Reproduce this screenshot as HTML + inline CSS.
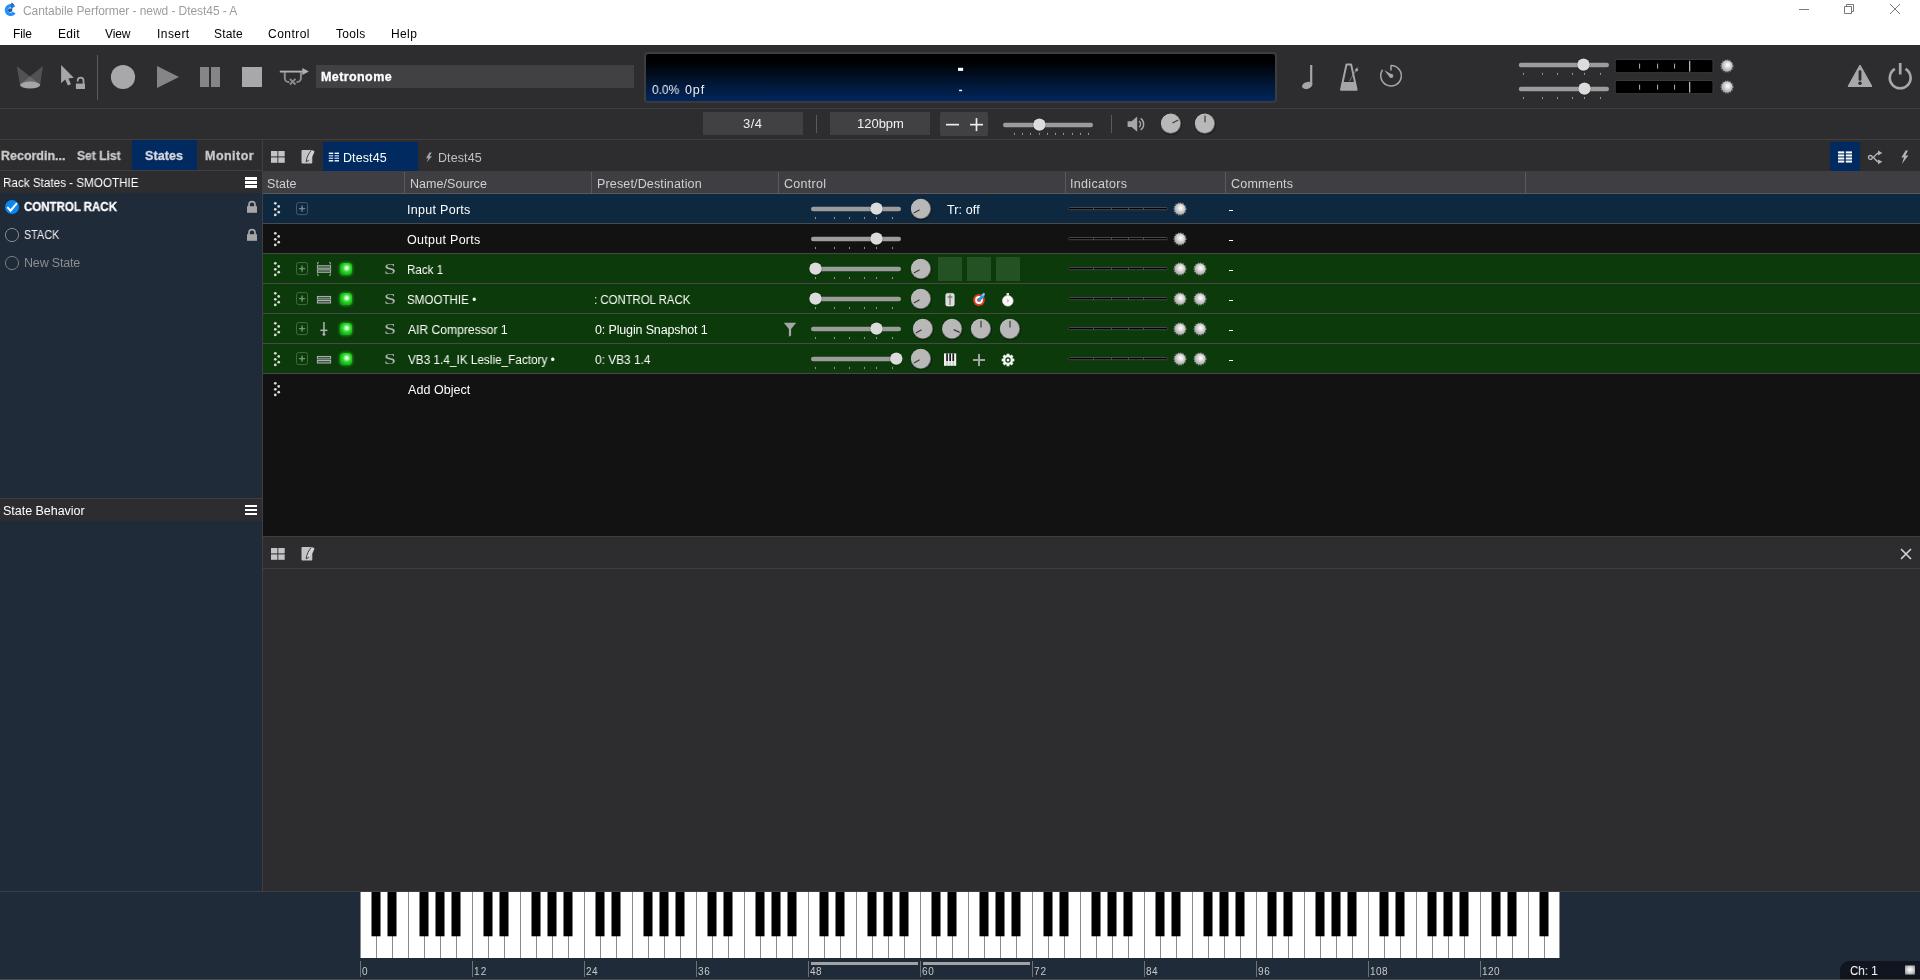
<!DOCTYPE html>
<html lang="en"><head><meta charset="utf-8"><title>Cantabile Performer - newd - Dtest45 - A</title>
<style>
html,body{margin:0;padding:0}
body{width:1920px;height:980px;position:relative;overflow:hidden;background:#2d2d2f;font-family:"Liberation Sans",sans-serif;font-size:12.5px}
.a{position:absolute;display:block}
.t{position:absolute;white-space:pre;line-height:20px;transform-origin:0 0;display:block;will-change:transform}
</style></head><body>
<svg width="0" height="0" style="position:absolute"><defs>
<radialGradient id="led" cx="56%" cy="42%" r="62%"><stop offset="0" stop-color="#ffffff"/><stop offset="0.18" stop-color="#f2f2f2"/><stop offset="0.5" stop-color="#d0d0d0"/><stop offset="0.85" stop-color="#aeaeae"/><stop offset="1" stop-color="#989898"/></radialGradient>
<radialGradient id="gled" cx="56%" cy="42%" r="62%"><stop offset="0" stop-color="#ffffff"/><stop offset="0.22" stop-color="#b8f8b8"/><stop offset="0.5" stop-color="#34dc34"/><stop offset="0.85" stop-color="#16b816"/><stop offset="1" stop-color="#12a012"/></radialGradient>
<linearGradient id="knob" x1="0.15" y1="0.1" x2="0.85" y2="0.9"><stop offset="0" stop-color="#dadada"/><stop offset="0.5" stop-color="#7a7a7a"/><stop offset="1" stop-color="#4a4a4a"/></linearGradient>
<linearGradient id="disp" x1="0" y1="0" x2="0" y2="1"><stop offset="0" stop-color="#000000"/><stop offset="0.18" stop-color="#000000"/><stop offset="1" stop-color="#01265e"/></linearGradient>
</defs></svg>

<div class="a" style="left:0px;top:0px;width:1920px;height:45px;background:#ffffff;"></div>
<svg class="a" style="left:2px;top:1px" width="16" height="16" viewBox="0 0 16 16"><path d="M13.3 5.2 A6 6 0 1 0 13.6 12.6 L10.6 10.6 A2.6 2.6 0 1 1 10.2 7.2 Z" fill="#1e90ff"/><circle cx="8" cy="9.3" r="2.1" fill="#2a5c9c"/><path d="M9.3 9.3V1.6c1.4.3 3 1.6 3.2 4-1-1.3-1.9-1.8-2.2-1.8v5.5z" fill="#2a5c9c"/></svg>
<span class="t" style="left:23.21px;top:0.59px;font-size:12px;color:#9e9e9e;letter-spacing:-0.062px;">Cantabile Performer - newd - Dtest45 - A</span>
<span class="t" style="left:12.77px;top:23.84px;font-size:12px;color:#000;letter-spacing:-0.139px;">File</span>
<span class="t" style="left:57.77px;top:23.84px;font-size:12px;color:#000;letter-spacing:0.268px;">Edit</span>
<span class="t" style="left:104.82px;top:23.84px;font-size:12px;color:#000;letter-spacing:-0.123px;">View</span>
<span class="t" style="left:156.62px;top:23.84px;font-size:12px;color:#000;letter-spacing:0.437px;">Insert</span>
<span class="t" style="left:214.28px;top:23.84px;font-size:12px;color:#000;letter-spacing:0.165px;">State</span>
<span class="t" style="left:268.46px;top:23.84px;font-size:12px;color:#000;letter-spacing:0.464px;">Control</span>
<span class="t" style="left:335.9px;top:23.84px;font-size:12px;color:#000;letter-spacing:0.324px;">Tools</span>
<span class="t" style="left:391.07px;top:23.84px;font-size:12px;color:#000;letter-spacing:0.383px;">Help</span>
<svg class="a" style="left:1790px;top:0px" width="130" height="20" viewBox="0 0 130 20"><g stroke="#7a7a7a" stroke-width="1" fill="none"><path d="M9 9.5h10"/><path d="M54.5 6.5h7v7h-7z"/><path d="M56.5 6.5v-2h7v7h-2"/><path d="M100 4l10 10M110 4l-10 10"/></g></svg>
<div class="a" style="left:0px;top:108px;width:1920px;height:1px;background:#3f3f42;"></div>
<div class="a" style="left:0px;top:139px;width:1920px;height:1px;background:#3f3f42;"></div>
<svg class="a" style="left:14px;top:62px" width="32" height="30" viewBox="0 0 32 30"><polygon points="2.8,4 6.1,23.5 26,22.5" fill="#8e8e92" fill-opacity="0.38"/><polygon points="29,4 26,23.5 6,22.5" fill="#8e8e92" fill-opacity="0.38"/><ellipse cx="16.1" cy="23.1" rx="10.1" ry="3.5" fill="#a6a6a9"/></svg>
<svg class="a" style="left:58px;top:62px" width="30" height="30" viewBox="0 0 30 30"><polygon points="3.1,3.1 3.1,21.2 7.2,17.6 9.9,23.6 13,22.2 10.4,16.4 15.8,15.8" fill="#a6a6a9"/><rect x="17.9" y="21.6" width="9.1" height="5.4" fill="#a6a6a9"/><path d="M19.7 19.6v-1a2.9 2.9 0 0 1 5.8 0v3.2" fill="none" stroke="#a6a6a9" stroke-width="1.7"/></svg>
<div class="a" style="left:97px;top:55px;width:1px;height:45px;background:#5a5a5c;"></div>
<svg class="a" style="left:110px;top:64px" width="26" height="26" viewBox="0 0 26 26"><circle cx="13" cy="13" r="12.1" fill="#a8a8ab"/></svg>
<svg class="a" style="left:156px;top:65px" width="24" height="24" viewBox="0 0 24 24"><polygon points="1,1 23,12 1,23" fill="#858587"/></svg>
<div class="a" style="left:200px;top:67px;width:8.5px;height:20px;background:#858587;"></div>
<div class="a" style="left:211px;top:67px;width:9px;height:20px;background:#858587;"></div>
<div class="a" style="left:242px;top:67px;width:20px;height:20px;background:#a8a8ab;"></div>
<svg class="a" style="left:278px;top:64px" width="34" height="24" viewBox="0 0 34 24"><path d="M6.8 8.3v5.9a3.8 3.8 0 0 0 3.8 3.8h0.6M22.9 8.3v5.9a3.8 3.8 0 0 1-3.8 3.8h-0.6" fill="none" stroke="#8a8a8d" stroke-width="2"/><path d="M11.9 14.9l5.6 5.6M17.5 14.9l-5.6 5.6" stroke="#8a8a8d" stroke-width="1.9"/><path d="M1.8 7.6h23" stroke="#b0b0b3" stroke-width="1.9"/><polygon points="24.3,4.1 30.9,7.6 24.3,10.9" fill="#b0b0b3"/></svg>
<div class="a" style="left:316px;top:65px;width:318px;height:23px;background:#414143;"></div>
<span class="t" style="left:320.77px;top:66.67px;font-size:12.5px;color:#ffffff;font-weight:700;-webkit-text-stroke:0.3px #ffffff;letter-spacing:0.406px;">Metronome</span>
<div class="a" style="left:644px;top:52px;width:629px;height:46.6px;border:2px solid #3d3d40;border-bottom-color:#39393c;border-radius:4px;background:linear-gradient(#000 0%,#000 15%,#011532 60%,#01265e 100%)"></div>
<span class="t" style="left:651.58px;top:80.27px;font-size:12.5px;color:#f0f0f0;transform:scaleX(0.9489);">0.0%</span>
<span class="t" style="left:684.58px;top:80.27px;font-size:12.5px;color:#f0f0f0;letter-spacing:0.861px;">0pf</span>
<svg class="a" style="left:956px;top:66px" width="10" height="28" viewBox="0 0 10 28"><rect x="2" y="1.8" width="5.1" height="3.1" fill="#fff"/><rect x="3.1" y="23.7" width="3" height="1.5" fill="#f4f4f4"/></svg>
<svg class="a" style="left:1300px;top:62px" width="16" height="30" viewBox="0 0 16 30"><ellipse cx="7.2" cy="23.4" rx="5.3" ry="3.4" transform="rotate(-18 7.2 23.4)" fill="#a6a6a9"/><rect x="10.1" y="3" width="2.2" height="20" fill="#a6a6a9"/></svg>
<svg class="a" style="left:1337px;top:61px" width="26" height="32" viewBox="0 0 26 32"><path d="M9.5 3.4h4.6l5.5 25.4h-15.6z" fill="none" stroke="#a6a6a9" stroke-width="2" stroke-linejoin="round"/><path d="M5.2 21h13.2l1.6 8h-16.4z" fill="#a6a6a9"/><path d="M12.4 20.2l8.6-14" stroke="#a6a6a9" stroke-width="0.8" stroke-opacity="0.8"/><rect x="18.3" y="7.6" width="2.6" height="2.6" transform="rotate(32 19.6 8.9)" fill="#a6a6a9"/></svg>
<svg class="a" style="left:1378px;top:62px" width="26" height="28" viewBox="0 0 26 28"><path d="M13 3.4a10.3 10.3 0 1 1-8.4 4.4" fill="none" stroke="#a6a6a9" stroke-width="1.5"/><path d="M13 3v5.6" stroke="#a6a6a9" stroke-width="1.5"/><path d="M6.2 8.2l8.4 4.6-2.4 3z" fill="#a6a6a9"/><circle cx="13.3" cy="14.1" r="2" fill="#a6a6a9"/></svg>
<svg class="a" style="left:1508px;top:55px" width="111" height="24" viewBox="0 0 111 24"><rect x="10.75" y="7.799999999999997" width="90.25" height="4.4" rx="2.2" fill="#9c9c9c"/><rect x="15.0" y="17.799999999999997" width="1" height="2.2" fill="#8e8e8e"/><rect x="34.0" y="17.799999999999997" width="1" height="2.2" fill="#8e8e8e"/><rect x="49.0" y="17.799999999999997" width="1" height="2.2" fill="#8e8e8e"/><rect x="64.0" y="17.799999999999997" width="1" height="2.2" fill="#8e8e8e"/><rect x="76.0" y="17.799999999999997" width="1" height="2.2" fill="#8e8e8e"/><rect x="92.0" y="17.799999999999997" width="1" height="2.2" fill="#8e8e8e"/><circle cx="75.5" cy="9.700000000000003" r="6.9" fill="#000" fill-opacity="0.25"/><circle cx="75.5" cy="9.599999999999994" r="6.2" fill="#dcdcdc"/></svg>
<svg class="a" style="left:1508px;top:79px" width="111" height="24" viewBox="0 0 111 24"><rect x="10.75" y="7.799999999999997" width="90.25" height="4.4" rx="2.2" fill="#9c9c9c"/><rect x="15.0" y="17.900000000000006" width="1" height="2.2" fill="#8e8e8e"/><rect x="34.0" y="17.900000000000006" width="1" height="2.2" fill="#8e8e8e"/><rect x="49.0" y="17.900000000000006" width="1" height="2.2" fill="#8e8e8e"/><rect x="64.0" y="17.900000000000006" width="1" height="2.2" fill="#8e8e8e"/><rect x="76.0" y="17.900000000000006" width="1" height="2.2" fill="#8e8e8e"/><rect x="92.0" y="17.900000000000006" width="1" height="2.2" fill="#8e8e8e"/><circle cx="76.5" cy="9.700000000000003" r="6.9" fill="#000" fill-opacity="0.25"/><circle cx="76.5" cy="9.599999999999994" r="6.2" fill="#dcdcdc"/></svg>
<svg class="a" style="left:1614px;top:59.4px" width="100" height="15" viewBox="0 0 100 15"><rect x="1.2" y="0.5" width="97.8" height="13.2" rx="2" fill="#000" stroke="#3a3a3c" stroke-width="1"/><rect x="25" y="4.6" width="1.1" height="5" fill="#a4a4a4"/><rect x="43" y="4.6" width="1.1" height="5" fill="#a4a4a4"/><rect x="60" y="4.6" width="1.1" height="5" fill="#a4a4a4"/><rect x="75" y="1.8" width="1.3" height="10.8" fill="#b4b4b4"/></svg>
<svg class="a" style="left:1614px;top:79.6px" width="100" height="15" viewBox="0 0 100 15"><rect x="1.2" y="0.5" width="97.8" height="13.2" rx="2" fill="#000" stroke="#3a3a3c" stroke-width="1"/><rect x="25" y="4.6" width="1.1" height="5" fill="#a4a4a4"/><rect x="43" y="4.6" width="1.1" height="5" fill="#a4a4a4"/><rect x="60" y="4.6" width="1.1" height="5" fill="#a4a4a4"/><rect x="75" y="1.8" width="1.3" height="10.8" fill="#b4b4b4"/></svg>
<svg class="a" style="left:1719px;top:58px" width="16" height="16" viewBox="0 0 16 16"><circle cx="8" cy="8" r="5.95" fill="none" stroke="#8a868a" stroke-width="1.3" stroke-dasharray="1.25 1.25"/><circle cx="8" cy="8" r="5.65" fill="url(#led)"/></svg>
<svg class="a" style="left:1719px;top:79px" width="16" height="16" viewBox="0 0 16 16"><circle cx="8" cy="8" r="5.95" fill="none" stroke="#8a868a" stroke-width="1.3" stroke-dasharray="1.25 1.25"/><circle cx="8" cy="8" r="5.65" fill="url(#led)"/></svg>
<svg class="a" style="left:1846px;top:62px" width="28" height="28" viewBox="0 0 28 28"><path d="M14 3.6L25.4 24.2H2.6z" fill="#a8a8ac" stroke="#a8a8ac" stroke-width="1.6" stroke-linejoin="round"/><path d="M14 9.6v7.8" stroke="#2d2d2f" stroke-width="2.8" stroke-linecap="round"/><circle cx="14" cy="21.2" r="1.7" fill="#2d2d2f"/></svg>
<svg class="a" style="left:1886px;top:60px" width="30" height="32" viewBox="0 0 30 32"><path d="M8.9 8.9a10.4 10.4 0 1 0 10.6 0" fill="none" stroke="#a8a8ac" stroke-width="2.6"/><path d="M14.2 3v11.5" stroke="#a8a8ac" stroke-width="2.7"/></svg>
<div class="a" style="left:703px;top:112px;width:100px;height:23px;background:#414143;"></div>
<span class="t" style="left:743.24px;top:113.5px;font-size:13px;color:#f0f0f0;letter-spacing:0.433px;">3/4</span>
<div class="a" style="left:816px;top:115px;width:1px;height:18px;background:#5a5a5c;"></div>
<div class="a" style="left:830px;top:112px;width:100px;height:23px;background:#414143;"></div>
<span class="t" style="left:856.67px;top:113.5px;font-size:13px;color:#f0f0f0;letter-spacing:-0.019px;">120bpm</span>
<div class="a" style="left:940px;top:112px;width:48px;height:24px;background:#414143;border-radius:2px"></div>
<svg class="a" style="left:944px;top:116px" width="42" height="18" viewBox="0 0 42 18"><g fill="#ececec"><rect x="2" y="7.8" width="13" height="1.7"/><rect x="26" y="7.8" width="13" height="1.7"/><rect x="31.65" y="2.1" width="1.7" height="13"/></g></svg>
<svg class="a" style="left:993px;top:115px" width="110" height="24" viewBox="0 0 110 24"><rect x="10" y="7.799999999999997" width="90" height="4.4" rx="2.2" fill="#9c9c9c"/><rect x="20.899999999999977" y="17.80000000000001" width="1" height="2.2" fill="#8e8e8e"/><rect x="29.0" y="17.80000000000001" width="1" height="2.2" fill="#8e8e8e"/><rect x="37.0" y="17.80000000000001" width="1" height="2.2" fill="#8e8e8e"/><rect x="45.90000000000009" y="17.80000000000001" width="1" height="2.2" fill="#8e8e8e"/><rect x="54.0" y="17.80000000000001" width="1" height="2.2" fill="#8e8e8e"/><rect x="62.0" y="17.80000000000001" width="1" height="2.2" fill="#8e8e8e"/><rect x="70.0" y="17.80000000000001" width="1" height="2.2" fill="#8e8e8e"/><rect x="79.0" y="17.80000000000001" width="1" height="2.2" fill="#8e8e8e"/><rect x="87.0" y="17.80000000000001" width="1" height="2.2" fill="#8e8e8e"/><rect x="95.0" y="17.80000000000001" width="1" height="2.2" fill="#8e8e8e"/><circle cx="46.40000000000009" cy="9.700000000000003" r="6.9" fill="#000" fill-opacity="0.25"/><circle cx="46.40000000000009" cy="9.599999999999994" r="6.2" fill="#dcdcdc"/></svg>
<div class="a" style="left:1111px;top:115px;width:1px;height:18px;background:#5a5a5c;"></div>
<svg class="a" style="left:1125px;top:114px" width="22" height="20" viewBox="0 0 22 20"><path d="M2.6 7.2h4l5.6-4.8v15.4l-5.6-4.8h-4z" fill="#a6a6a9"/><path d="M14 7.2a3.6 3.6 0 0 1 0 6" fill="none" stroke="#a6a6a9" stroke-width="1.4"/><path d="M15.6 4.4a7 7 0 0 1 0 11.6" fill="none" stroke="#a6a6a9" stroke-width="1.4"/></svg>
<svg class="a" style="left:1158px;top:110px" width="26" height="26" viewBox="0 0 26 26"><circle cx="13.3" cy="14.199999999999998" r="10.899999999999999" fill="#000" fill-opacity="0.3"/><circle cx="13" cy="13.799999999999997" r="10.2" fill="url(#knob)"/><circle cx="12.85" cy="13.599999999999998" r="9.45" fill="#b8b8b8"/><line x1="14.41" y1="13.05" x2="20.24" y2="9.95" stroke="#3c3c3c" stroke-width="1.2"/></svg>
<svg class="a" style="left:1192px;top:110px" width="26" height="26" viewBox="0 0 26 26"><circle cx="13.3" cy="14.199999999999998" r="10.899999999999999" fill="#000" fill-opacity="0.3"/><circle cx="13" cy="13.799999999999997" r="10.2" fill="url(#knob)"/><circle cx="12.85" cy="13.599999999999998" r="9.45" fill="#b8b8b8"/><line x1="13.00" y1="12.20" x2="13.00" y2="5.60" stroke="#3c3c3c" stroke-width="1.2"/></svg>
<div class="a" style="left:0px;top:140px;width:262px;height:751px;background:#202b3a;"></div>
<div class="a" style="left:0px;top:140px;width:262px;height:30px;background:#2d2d2f;"></div>
<div class="a" style="left:132px;top:140px;width:65px;height:30px;background:#002a60;"></div>
<span class="t" style="left:0.77px;top:145.67px;font-size:12.5px;color:#c8c8c8;font-weight:700;-webkit-text-stroke:0.3px #c8c8c8;letter-spacing:-0.018px;">Recordin...</span>
<span class="t" style="left:76.88px;top:145.67px;font-size:12.5px;color:#c8c8c8;font-weight:700;-webkit-text-stroke:0.3px #c8c8c8;transform:scaleX(0.9663);">Set List</span>
<span class="t" style="left:145.38px;top:145.67px;font-size:12.5px;color:#d4d8e0;font-weight:700;-webkit-text-stroke:0.3px #d4d8e0;letter-spacing:0.094px;">States</span>
<span class="t" style="left:204.87px;top:145.67px;font-size:12.5px;color:#c8c8c8;font-weight:700;-webkit-text-stroke:0.3px #c8c8c8;letter-spacing:0.467px;">Monitor</span>
<div class="a" style="left:0px;top:170px;width:262px;height:1px;background:#3f3f42;"></div>
<div class="a" style="left:0px;top:171px;width:262px;height:22px;background:#2d2d2f;"></div>
<span class="t" style="left:2.68px;top:172.92px;font-size:12.5px;color:#ffffff;transform:scaleX(0.934);">Rack States - SMOOTHIE</span>
<div class="a" style="left:245px;top:177.2px;width:12px;height:2.4px;background:#ffffff;"></div>
<div class="a" style="left:245px;top:181.2px;width:12px;height:2.4px;background:#ffffff;"></div>
<div class="a" style="left:245px;top:185.2px;width:12px;height:2.4px;background:#ffffff;"></div>
<svg class="a" style="left:4px;top:199px" width="16" height="16" viewBox="0 0 16 16"><circle cx="8" cy="8" r="7" fill="#0c86f2"/><path d="M3.3 8.1l3.3 3.6 6.3-7.6" fill="none" stroke="#fff" stroke-width="2"/></svg>
<svg class="a" style="left:4px;top:227px" width="16" height="16" viewBox="0 0 16 16"><circle cx="8" cy="8" r="6.6" fill="none" stroke="#8a8a8a" stroke-width="1"/></svg>
<svg class="a" style="left:4px;top:255px" width="16" height="16" viewBox="0 0 16 16"><circle cx="8" cy="8" r="6.6" fill="none" stroke="#7c7c7c" stroke-width="1"/></svg>
<span class="t" style="left:23.99px;top:196.67px;font-size:12.5px;color:#ffffff;font-weight:700;-webkit-text-stroke:0.3px #ffffff;transform:scaleX(0.9186);">CONTROL RACK</span>
<span class="t" style="left:23.74px;top:224.67px;font-size:12.5px;color:#f0f0f0;transform:scaleX(0.8638);">STACK</span>
<span class="t" style="left:24.06px;top:252.67px;font-size:12.5px;color:#8c8c8c;letter-spacing:-0.175px;">New State</span>
<svg class="a" style="left:245px;top:200px" width="14" height="14" viewBox="0 0 14 14"><rect x="2" y="6.2" width="10" height="6.6" fill="#a6a6a9"/><path d="M4 7V4.6a3 3 0 0 1 6 0V7" fill="none" stroke="#a6a6a9" stroke-width="1.7"/></svg>
<svg class="a" style="left:245px;top:228.4px" width="14" height="14" viewBox="0 0 14 14"><rect x="2" y="6.2" width="10" height="6.6" fill="#a6a6a9"/><path d="M4 7V4.6a3 3 0 0 1 6 0V7" fill="none" stroke="#a6a6a9" stroke-width="1.7"/></svg>
<div class="a" style="left:0px;top:498px;width:262px;height:1px;background:#3f3f42;"></div>
<div class="a" style="left:0px;top:499px;width:262px;height:22px;background:#2d2d2f;"></div>
<span class="t" style="left:2.75px;top:500.92px;font-size:12.5px;color:#ffffff;letter-spacing:-0.023px;">State Behavior</span>
<div class="a" style="left:245px;top:505px;width:12px;height:2.4px;background:#ffffff;"></div>
<div class="a" style="left:245px;top:509px;width:12px;height:2.4px;background:#ffffff;"></div>
<div class="a" style="left:245px;top:513px;width:12px;height:2.4px;background:#ffffff;"></div>
<div class="a" style="left:262px;top:140px;width:1px;height:751px;background:#3f3f42;"></div>
<svg class="a" style="left:270.1px;top:150px" width="16" height="14" viewBox="0 0 16 14"><rect x="1.0" y="1.0" width="6.4" height="5.4" fill="#c4c4c6"/><rect x="1.0" y="7.4" width="6.4" height="5.4" fill="#c4c4c6"/><rect x="8.3" y="1.0" width="6.4" height="5.4" fill="#c4c4c6"/><rect x="8.3" y="7.4" width="6.4" height="5.4" fill="#c4c4c6"/></svg>
<svg class="a" style="left:300px;top:149px" width="16" height="16" viewBox="0 0 16 16"><rect x="1.5" y="1" width="10.8" height="13.5" rx="1" fill="#c4c4c6"/><path d="M11 0.8L14.5 2.2 C13.4 6 11.4 10 6.2 12.8 C6.2 9.4 8 4.6 11 0.8Z" fill="#d2d2d4"/><path d="M11.3 1.2C9 4.2 6.4 8.6 6.2 12.8l2.6-1.6" fill="none" stroke="#2a2a2c" stroke-width="0.9"/></svg>
<div class="a" style="left:323px;top:142px;width:95px;height:29px;background:#002a60;"></div>
<svg class="a" style="left:328px;top:152px" width="12" height="10" viewBox="0 0 12 10"><rect x="0.8" y="0.6" width="4.4" height="1.4" fill="#ffffff"/><rect x="0.8" y="3.1" width="4.4" height="1.4" fill="#b8c4de"/><rect x="0.8" y="5.6" width="4.4" height="1.4" fill="#b8c4de"/><rect x="0.8" y="8.1" width="4.4" height="1.4" fill="#ffffff"/><rect x="6.6" y="0.6" width="4.4" height="1.4" fill="#ffffff"/><rect x="6.6" y="3.1" width="4.4" height="1.4" fill="#b8c4de"/><rect x="6.6" y="5.6" width="4.4" height="1.4" fill="#b8c4de"/><rect x="6.6" y="8.1" width="4.4" height="1.4" fill="#ffffff"/></svg>
<span class="t" style="left:342.66px;top:147.67px;font-size:12.5px;color:#ffffff;letter-spacing:0.094px;">Dtest45</span>
<svg class="a" style="left:424px;top:151px" width="10" height="14" viewBox="0 0 10 14"><path d="M5.4 1.6L2 7.2h2.4L2.6 11.4 8 5.2H5.4L7.8 1.6z" fill="#a6a6a9"/></svg>
<span class="t" style="left:437.66px;top:147.67px;font-size:12.5px;color:#c0c0c0;letter-spacing:0.094px;">Dtest45</span>
<div class="a" style="left:1830px;top:142px;width:30px;height:29px;background:#002a60;"></div>
<svg class="a" style="left:1838px;top:151px" width="14" height="12" viewBox="0 0 14 12"><rect x="0.0" y="0.4" width="6.2" height="2" fill="#ffffff"/><rect x="0.0" y="3.4499999999999997" width="6.2" height="2" fill="#ffffff"/><rect x="0.0" y="6.5" width="6.2" height="2" fill="#ffffff"/><rect x="0.0" y="9.549999999999999" width="6.2" height="2" fill="#ffffff"/><rect x="7.8" y="0.4" width="6.2" height="2" fill="#ffffff"/><rect x="7.8" y="3.4499999999999997" width="6.2" height="2" fill="#ffffff"/><rect x="7.8" y="6.5" width="6.2" height="2" fill="#ffffff"/><rect x="7.8" y="9.549999999999999" width="6.2" height="2" fill="#ffffff"/></svg>
<svg class="a" style="left:1866px;top:148px" width="18" height="18" viewBox="0 0 18 18"><g fill="none" stroke="#b4b4b6" stroke-width="1.3"><circle cx="4.4" cy="9.4" r="1.9"/><path d="M6.4 9.4c3 0 3-4.4 6.4-4.4M6.4 9.4c3 0 3 4.4 6.4 4.4"/></g><polygon points="12,2.6 16.4,5 12,7.4" fill="#b4b4b6"/><polygon points="12,11.4 16.4,13.8 12,16.2" fill="#b4b4b6"/></svg>
<svg class="a" style="left:1899px;top:149px" width="12" height="16" viewBox="0 0 12 16"><path d="M6.6 1.6L2.4 8.4h2.6L2.8 15 9.4 6.6H6.4L9 1.6z" fill="#b4b4b6"/></svg>
<div class="a" style="left:263px;top:171px;width:1657px;height:22px;background:#3f3f43;"></div>
<div class="a" style="left:263px;top:193px;width:1657px;height:1px;background:#5a5a5e;"></div>
<div class="a" style="left:404px;top:172px;width:1px;height:21px;background:#5a5a5e;"></div>
<div class="a" style="left:591px;top:172px;width:1px;height:21px;background:#5a5a5e;"></div>
<div class="a" style="left:778px;top:172px;width:1px;height:21px;background:#5a5a5e;"></div>
<div class="a" style="left:1065px;top:172px;width:1px;height:21px;background:#5a5a5e;"></div>
<div class="a" style="left:1225px;top:172px;width:1px;height:21px;background:#5a5a5e;"></div>
<div class="a" style="left:1525px;top:172px;width:1px;height:21px;background:#5a5a5e;"></div>
<span class="t" style="left:267.25px;top:173.67px;font-size:12.5px;color:#d0d0d0;letter-spacing:0.048px;">State</span>
<span class="t" style="left:409.66px;top:173.67px;font-size:12.5px;color:#d0d0d0;letter-spacing:0.044px;">Name/Source</span>
<span class="t" style="left:596.66px;top:173.67px;font-size:12.5px;color:#d0d0d0;letter-spacing:0.147px;">Preset/Destination</span>
<span class="t" style="left:783.68px;top:173.67px;font-size:12.5px;color:#d0d0d0;letter-spacing:0.28px;">Control</span>
<span class="t" style="left:1070.11px;top:173.67px;font-size:12.5px;color:#d0d0d0;letter-spacing:0.307px;">Indicators</span>
<span class="t" style="left:1230.68px;top:173.67px;font-size:12.5px;color:#d0d0d0;letter-spacing:0.228px;">Comments</span>
<div class="a" style="left:263px;top:194px;width:1657px;height:342px;background:#121212;"></div>
<div class="a" style="left:263px;top:194px;width:1657px;height:29px;background:#0e2840;"></div>
<div class="a" style="left:263px;top:223px;width:1657px;height:1px;background:#4a4a4c;"></div>
<svg class="a" style="left:273px;top:201px" width="8" height="17" viewBox="0 0 8 17"><circle cx="2.3" cy="2.3" r="1.35" fill="#dadada"/><circle cx="5.7" cy="5.4" r="1.35" fill="#dadada"/><circle cx="2.3" cy="8.3" r="1.35" fill="#dadada"/><circle cx="5.7" cy="11.2" r="1.35" fill="#dadada"/><circle cx="2.3" cy="13.9" r="1.35" fill="#dadada"/></svg>
<svg class="a" style="left:295px;top:201px" width="14" height="15" viewBox="0 0 14 15"><rect x="1.55" y="1.6" width="11" height="12" rx="2" fill="none" stroke="#46586e" stroke-width="1"/><path d="M7.05 4.5v6.2M3.95 7.6h6.2" stroke="#71839b" stroke-width="1.3"/><rect x="6.1" y="6.65" width="1.9" height="1.9" fill="#71839b"/></svg>
<svg class="a" style="left:801px;top:199px" width="110" height="24" viewBox="0 0 110 24"><rect x="10" y="7.800000000000011" width="90" height="4.4" rx="2.2" fill="#9c9c9c"/><rect x="14.0" y="17.900000000000006" width="1" height="2.2" fill="#8e8e8e"/><rect x="33.0" y="17.900000000000006" width="1" height="2.2" fill="#8e8e8e"/><rect x="48.0" y="17.900000000000006" width="1" height="2.2" fill="#8e8e8e"/><rect x="63.0" y="17.900000000000006" width="1" height="2.2" fill="#8e8e8e"/><rect x="75.0" y="17.900000000000006" width="1" height="2.2" fill="#8e8e8e"/><rect x="91.0" y="17.900000000000006" width="1" height="2.2" fill="#8e8e8e"/><circle cx="75.5" cy="9.699999999999989" r="6.9" fill="#000" fill-opacity="0.25"/><circle cx="75.5" cy="9.599999999999994" r="6.2" fill="#dcdcdc"/></svg>
<svg class="a" style="left:1068px;top:207.2px" width="100" height="4" viewBox="0 0 100 4"><rect x="0.5" y="0.5" width="99" height="2.2" rx="1.1" fill="#000" stroke="#4e4e50" stroke-width="0.9"/><rect x="25.0" y="0.2" width="1" height="2.8" fill="#4e4e50"/><rect x="43.0" y="0.2" width="1" height="2.8" fill="#4e4e50"/><rect x="60.0" y="0.2" width="1" height="2.8" fill="#4e4e50"/><rect x="75.0" y="0.2" width="1" height="2.8" fill="#4e4e50"/></svg>
<svg class="a" style="left:1172px;top:201px" width="16" height="16" viewBox="0 0 16 16"><circle cx="8" cy="8" r="5.95" fill="none" stroke="#8a868a" stroke-width="1.3" stroke-dasharray="1.25 1.25"/><circle cx="8" cy="8" r="5.65" fill="url(#led)"/></svg>
<div class="a" style="left:1229px;top:209.6px;width:4px;height:1.5px;background:#ffffff;"></div>
<svg class="a" style="left:908px;top:196px" width="26" height="26" viewBox="0 0 26 26"><circle cx="13.3" cy="13.4" r="10.899999999999999" fill="#000" fill-opacity="0.3"/><circle cx="13" cy="13" r="10.2" fill="url(#knob)"/><circle cx="12.85" cy="12.8" r="9.45" fill="#b8b8b8"/><line x1="11.60" y1="13.78" x2="5.83" y2="16.98" stroke="#3c3c3c" stroke-width="1.2"/></svg>
<div class="a" style="left:263px;top:253px;width:1657px;height:1px;background:#48484a;"></div>
<svg class="a" style="left:273px;top:231px" width="8" height="17" viewBox="0 0 8 17"><circle cx="2.3" cy="2.3" r="1.35" fill="#dadada"/><circle cx="5.7" cy="5.4" r="1.35" fill="#dadada"/><circle cx="2.3" cy="8.3" r="1.35" fill="#dadada"/><circle cx="5.7" cy="11.2" r="1.35" fill="#dadada"/><circle cx="2.3" cy="13.9" r="1.35" fill="#dadada"/></svg>
<svg class="a" style="left:801px;top:229px" width="110" height="24" viewBox="0 0 110 24"><rect x="10" y="7.800000000000011" width="90" height="4.4" rx="2.2" fill="#9c9c9c"/><rect x="14.0" y="17.900000000000006" width="1" height="2.2" fill="#8e8e8e"/><rect x="33.0" y="17.900000000000006" width="1" height="2.2" fill="#8e8e8e"/><rect x="48.0" y="17.900000000000006" width="1" height="2.2" fill="#8e8e8e"/><rect x="63.0" y="17.900000000000006" width="1" height="2.2" fill="#8e8e8e"/><rect x="75.0" y="17.900000000000006" width="1" height="2.2" fill="#8e8e8e"/><rect x="91.0" y="17.900000000000006" width="1" height="2.2" fill="#8e8e8e"/><circle cx="75.5" cy="9.699999999999989" r="6.9" fill="#000" fill-opacity="0.25"/><circle cx="75.5" cy="9.599999999999994" r="6.2" fill="#dcdcdc"/></svg>
<svg class="a" style="left:1068px;top:237.2px" width="100" height="4" viewBox="0 0 100 4"><rect x="0.5" y="0.5" width="99" height="2.2" rx="1.1" fill="#000" stroke="#4e4e50" stroke-width="0.9"/><rect x="25.0" y="0.2" width="1" height="2.8" fill="#4e4e50"/><rect x="43.0" y="0.2" width="1" height="2.8" fill="#4e4e50"/><rect x="60.0" y="0.2" width="1" height="2.8" fill="#4e4e50"/><rect x="75.0" y="0.2" width="1" height="2.8" fill="#4e4e50"/></svg>
<svg class="a" style="left:1172px;top:231px" width="16" height="16" viewBox="0 0 16 16"><circle cx="8" cy="8" r="5.95" fill="none" stroke="#8a868a" stroke-width="1.3" stroke-dasharray="1.25 1.25"/><circle cx="8" cy="8" r="5.65" fill="url(#led)"/></svg>
<div class="a" style="left:1229px;top:239.6px;width:4px;height:1.5px;background:#ffffff;"></div>
<div class="a" style="left:263px;top:254px;width:1657px;height:29px;background:#0c3a0a;"></div>
<div class="a" style="left:263px;top:283px;width:1657px;height:1px;background:#48484a;"></div>
<svg class="a" style="left:273px;top:261px" width="8" height="17" viewBox="0 0 8 17"><circle cx="2.3" cy="2.3" r="1.35" fill="#dadada"/><circle cx="5.7" cy="5.4" r="1.35" fill="#dadada"/><circle cx="2.3" cy="8.3" r="1.35" fill="#dadada"/><circle cx="5.7" cy="11.2" r="1.35" fill="#dadada"/><circle cx="2.3" cy="13.9" r="1.35" fill="#dadada"/></svg>
<svg class="a" style="left:295px;top:261px" width="14" height="15" viewBox="0 0 14 15"><rect x="1.55" y="1.6" width="11" height="12" rx="2" fill="none" stroke="#3f6e3f" stroke-width="1"/><path d="M7.05 4.5v6.2M3.95 7.6h6.2" stroke="#6a966a" stroke-width="1.3"/><rect x="6.1" y="6.65" width="1.9" height="1.9" fill="#6a966a"/></svg>
<svg class="a" style="left:801px;top:259px" width="110" height="24" viewBox="0 0 110 24"><rect x="10" y="7.800000000000011" width="90" height="4.4" rx="2.2" fill="#9c9c9c"/><rect x="14.0" y="17.899999999999977" width="1" height="2.2" fill="#8e8e8e"/><rect x="33.0" y="17.899999999999977" width="1" height="2.2" fill="#8e8e8e"/><rect x="48.0" y="17.899999999999977" width="1" height="2.2" fill="#8e8e8e"/><rect x="63.0" y="17.899999999999977" width="1" height="2.2" fill="#8e8e8e"/><rect x="75.0" y="17.899999999999977" width="1" height="2.2" fill="#8e8e8e"/><rect x="91.0" y="17.899999999999977" width="1" height="2.2" fill="#8e8e8e"/><circle cx="14.5" cy="9.699999999999989" r="6.9" fill="#000" fill-opacity="0.25"/><circle cx="14.5" cy="9.600000000000023" r="6.2" fill="#dcdcdc"/></svg>
<svg class="a" style="left:1068px;top:267.2px" width="100" height="4" viewBox="0 0 100 4"><rect x="0.5" y="0.5" width="99" height="2.2" rx="1.1" fill="#000" stroke="#4e4e50" stroke-width="0.9"/><rect x="25.0" y="0.2" width="1" height="2.8" fill="#4e4e50"/><rect x="43.0" y="0.2" width="1" height="2.8" fill="#4e4e50"/><rect x="60.0" y="0.2" width="1" height="2.8" fill="#4e4e50"/><rect x="75.0" y="0.2" width="1" height="2.8" fill="#4e4e50"/></svg>
<svg class="a" style="left:1172px;top:261px" width="16" height="16" viewBox="0 0 16 16"><circle cx="8" cy="8" r="5.95" fill="none" stroke="#8a868a" stroke-width="1.3" stroke-dasharray="1.25 1.25"/><circle cx="8" cy="8" r="5.65" fill="url(#led)"/></svg>
<svg class="a" style="left:1192px;top:261px" width="16" height="16" viewBox="0 0 16 16"><circle cx="8" cy="8" r="5.95" fill="none" stroke="#8a868a" stroke-width="1.3" stroke-dasharray="1.25 1.25"/><circle cx="8" cy="8" r="5.65" fill="url(#led)"/></svg>
<div class="a" style="left:1229px;top:269.6px;width:4px;height:1.5px;background:#ffffff;"></div>
<svg class="a" style="left:908px;top:256px" width="26" height="26" viewBox="0 0 26 26"><circle cx="13.3" cy="13.4" r="10.899999999999999" fill="#000" fill-opacity="0.3"/><circle cx="13" cy="13" r="10.2" fill="url(#knob)"/><circle cx="12.85" cy="12.8" r="9.45" fill="#b8b8b8"/><line x1="11.60" y1="13.78" x2="5.83" y2="16.98" stroke="#3c3c3c" stroke-width="1.2"/></svg>
<div class="a" style="left:263px;top:284px;width:1657px;height:29px;background:#0c3a0a;"></div>
<div class="a" style="left:263px;top:313px;width:1657px;height:1px;background:#48484a;"></div>
<svg class="a" style="left:273px;top:291px" width="8" height="17" viewBox="0 0 8 17"><circle cx="2.3" cy="2.3" r="1.35" fill="#dadada"/><circle cx="5.7" cy="5.4" r="1.35" fill="#dadada"/><circle cx="2.3" cy="8.3" r="1.35" fill="#dadada"/><circle cx="5.7" cy="11.2" r="1.35" fill="#dadada"/><circle cx="2.3" cy="13.9" r="1.35" fill="#dadada"/></svg>
<svg class="a" style="left:295px;top:291px" width="14" height="15" viewBox="0 0 14 15"><rect x="1.55" y="1.6" width="11" height="12" rx="2" fill="none" stroke="#3f6e3f" stroke-width="1"/><path d="M7.05 4.5v6.2M3.95 7.6h6.2" stroke="#6a966a" stroke-width="1.3"/><rect x="6.1" y="6.65" width="1.9" height="1.9" fill="#6a966a"/></svg>
<svg class="a" style="left:801px;top:289px" width="110" height="24" viewBox="0 0 110 24"><rect x="10" y="7.800000000000011" width="90" height="4.4" rx="2.2" fill="#9c9c9c"/><rect x="14.0" y="17.899999999999977" width="1" height="2.2" fill="#8e8e8e"/><rect x="33.0" y="17.899999999999977" width="1" height="2.2" fill="#8e8e8e"/><rect x="48.0" y="17.899999999999977" width="1" height="2.2" fill="#8e8e8e"/><rect x="63.0" y="17.899999999999977" width="1" height="2.2" fill="#8e8e8e"/><rect x="75.0" y="17.899999999999977" width="1" height="2.2" fill="#8e8e8e"/><rect x="91.0" y="17.899999999999977" width="1" height="2.2" fill="#8e8e8e"/><circle cx="14.5" cy="9.699999999999989" r="6.9" fill="#000" fill-opacity="0.25"/><circle cx="14.5" cy="9.600000000000023" r="6.2" fill="#dcdcdc"/></svg>
<svg class="a" style="left:1068px;top:297.2px" width="100" height="4" viewBox="0 0 100 4"><rect x="0.5" y="0.5" width="99" height="2.2" rx="1.1" fill="#000" stroke="#4e4e50" stroke-width="0.9"/><rect x="25.0" y="0.2" width="1" height="2.8" fill="#4e4e50"/><rect x="43.0" y="0.2" width="1" height="2.8" fill="#4e4e50"/><rect x="60.0" y="0.2" width="1" height="2.8" fill="#4e4e50"/><rect x="75.0" y="0.2" width="1" height="2.8" fill="#4e4e50"/></svg>
<svg class="a" style="left:1172px;top:291px" width="16" height="16" viewBox="0 0 16 16"><circle cx="8" cy="8" r="5.95" fill="none" stroke="#8a868a" stroke-width="1.3" stroke-dasharray="1.25 1.25"/><circle cx="8" cy="8" r="5.65" fill="url(#led)"/></svg>
<svg class="a" style="left:1192px;top:291px" width="16" height="16" viewBox="0 0 16 16"><circle cx="8" cy="8" r="5.95" fill="none" stroke="#8a868a" stroke-width="1.3" stroke-dasharray="1.25 1.25"/><circle cx="8" cy="8" r="5.65" fill="url(#led)"/></svg>
<div class="a" style="left:1229px;top:299.6px;width:4px;height:1.5px;background:#ffffff;"></div>
<svg class="a" style="left:908px;top:286px" width="26" height="26" viewBox="0 0 26 26"><circle cx="13.3" cy="13.4" r="10.899999999999999" fill="#000" fill-opacity="0.3"/><circle cx="13" cy="13" r="10.2" fill="url(#knob)"/><circle cx="12.85" cy="12.8" r="9.45" fill="#b8b8b8"/><line x1="11.60" y1="13.78" x2="5.83" y2="16.98" stroke="#3c3c3c" stroke-width="1.2"/></svg>
<div class="a" style="left:263px;top:314px;width:1657px;height:29px;background:#0c3a0a;"></div>
<div class="a" style="left:263px;top:343px;width:1657px;height:1px;background:#48484a;"></div>
<svg class="a" style="left:273px;top:321px" width="8" height="17" viewBox="0 0 8 17"><circle cx="2.3" cy="2.3" r="1.35" fill="#dadada"/><circle cx="5.7" cy="5.4" r="1.35" fill="#dadada"/><circle cx="2.3" cy="8.3" r="1.35" fill="#dadada"/><circle cx="5.7" cy="11.2" r="1.35" fill="#dadada"/><circle cx="2.3" cy="13.9" r="1.35" fill="#dadada"/></svg>
<svg class="a" style="left:295px;top:321px" width="14" height="15" viewBox="0 0 14 15"><rect x="1.55" y="1.6" width="11" height="12" rx="2" fill="none" stroke="#3f6e3f" stroke-width="1"/><path d="M7.05 4.5v6.2M3.95 7.6h6.2" stroke="#6a966a" stroke-width="1.3"/><rect x="6.1" y="6.65" width="1.9" height="1.9" fill="#6a966a"/></svg>
<svg class="a" style="left:801px;top:319px" width="110" height="24" viewBox="0 0 110 24"><rect x="10" y="7.800000000000011" width="90" height="4.4" rx="2.2" fill="#9c9c9c"/><rect x="14.0" y="17.899999999999977" width="1" height="2.2" fill="#8e8e8e"/><rect x="33.0" y="17.899999999999977" width="1" height="2.2" fill="#8e8e8e"/><rect x="48.0" y="17.899999999999977" width="1" height="2.2" fill="#8e8e8e"/><rect x="63.0" y="17.899999999999977" width="1" height="2.2" fill="#8e8e8e"/><rect x="75.0" y="17.899999999999977" width="1" height="2.2" fill="#8e8e8e"/><rect x="91.0" y="17.899999999999977" width="1" height="2.2" fill="#8e8e8e"/><circle cx="75.5" cy="9.699999999999989" r="6.9" fill="#000" fill-opacity="0.25"/><circle cx="75.5" cy="9.600000000000023" r="6.2" fill="#dcdcdc"/></svg>
<svg class="a" style="left:1068px;top:327.2px" width="100" height="4" viewBox="0 0 100 4"><rect x="0.5" y="0.5" width="99" height="2.2" rx="1.1" fill="#000" stroke="#4e4e50" stroke-width="0.9"/><rect x="25.0" y="0.2" width="1" height="2.8" fill="#4e4e50"/><rect x="43.0" y="0.2" width="1" height="2.8" fill="#4e4e50"/><rect x="60.0" y="0.2" width="1" height="2.8" fill="#4e4e50"/><rect x="75.0" y="0.2" width="1" height="2.8" fill="#4e4e50"/></svg>
<svg class="a" style="left:1172px;top:321px" width="16" height="16" viewBox="0 0 16 16"><circle cx="8" cy="8" r="5.95" fill="none" stroke="#8a868a" stroke-width="1.3" stroke-dasharray="1.25 1.25"/><circle cx="8" cy="8" r="5.65" fill="url(#led)"/></svg>
<svg class="a" style="left:1192px;top:321px" width="16" height="16" viewBox="0 0 16 16"><circle cx="8" cy="8" r="5.95" fill="none" stroke="#8a868a" stroke-width="1.3" stroke-dasharray="1.25 1.25"/><circle cx="8" cy="8" r="5.65" fill="url(#led)"/></svg>
<div class="a" style="left:1229px;top:329.6px;width:4px;height:1.5px;background:#ffffff;"></div>
<div class="a" style="left:263px;top:344px;width:1657px;height:29px;background:#0c3a0a;"></div>
<div class="a" style="left:263px;top:373px;width:1657px;height:1px;background:#48484a;"></div>
<svg class="a" style="left:273px;top:351px" width="8" height="17" viewBox="0 0 8 17"><circle cx="2.3" cy="2.3" r="1.35" fill="#dadada"/><circle cx="5.7" cy="5.4" r="1.35" fill="#dadada"/><circle cx="2.3" cy="8.3" r="1.35" fill="#dadada"/><circle cx="5.7" cy="11.2" r="1.35" fill="#dadada"/><circle cx="2.3" cy="13.9" r="1.35" fill="#dadada"/></svg>
<svg class="a" style="left:295px;top:351px" width="14" height="15" viewBox="0 0 14 15"><rect x="1.55" y="1.6" width="11" height="12" rx="2" fill="none" stroke="#3f6e3f" stroke-width="1"/><path d="M7.05 4.5v6.2M3.95 7.6h6.2" stroke="#6a966a" stroke-width="1.3"/><rect x="6.1" y="6.65" width="1.9" height="1.9" fill="#6a966a"/></svg>
<svg class="a" style="left:801px;top:349px" width="110" height="24" viewBox="0 0 110 24"><rect x="10" y="7.800000000000011" width="90" height="4.4" rx="2.2" fill="#9c9c9c"/><rect x="14.0" y="17.899999999999977" width="1" height="2.2" fill="#8e8e8e"/><rect x="33.0" y="17.899999999999977" width="1" height="2.2" fill="#8e8e8e"/><rect x="48.0" y="17.899999999999977" width="1" height="2.2" fill="#8e8e8e"/><rect x="63.0" y="17.899999999999977" width="1" height="2.2" fill="#8e8e8e"/><rect x="75.0" y="17.899999999999977" width="1" height="2.2" fill="#8e8e8e"/><rect x="91.0" y="17.899999999999977" width="1" height="2.2" fill="#8e8e8e"/><circle cx="95.29999999999995" cy="9.699999999999989" r="6.9" fill="#000" fill-opacity="0.25"/><circle cx="95.29999999999995" cy="9.600000000000023" r="6.2" fill="#dcdcdc"/></svg>
<svg class="a" style="left:1068px;top:357.2px" width="100" height="4" viewBox="0 0 100 4"><rect x="0.5" y="0.5" width="99" height="2.2" rx="1.1" fill="#000" stroke="#4e4e50" stroke-width="0.9"/><rect x="25.0" y="0.2" width="1" height="2.8" fill="#4e4e50"/><rect x="43.0" y="0.2" width="1" height="2.8" fill="#4e4e50"/><rect x="60.0" y="0.2" width="1" height="2.8" fill="#4e4e50"/><rect x="75.0" y="0.2" width="1" height="2.8" fill="#4e4e50"/></svg>
<svg class="a" style="left:1172px;top:351px" width="16" height="16" viewBox="0 0 16 16"><circle cx="8" cy="8" r="5.95" fill="none" stroke="#8a868a" stroke-width="1.3" stroke-dasharray="1.25 1.25"/><circle cx="8" cy="8" r="5.65" fill="url(#led)"/></svg>
<svg class="a" style="left:1192px;top:351px" width="16" height="16" viewBox="0 0 16 16"><circle cx="8" cy="8" r="5.95" fill="none" stroke="#8a868a" stroke-width="1.3" stroke-dasharray="1.25 1.25"/><circle cx="8" cy="8" r="5.65" fill="url(#led)"/></svg>
<div class="a" style="left:1229px;top:359.6px;width:4px;height:1.5px;background:#ffffff;"></div>
<svg class="a" style="left:908px;top:346px" width="26" height="26" viewBox="0 0 26 26"><circle cx="13.3" cy="13.4" r="10.899999999999999" fill="#000" fill-opacity="0.3"/><circle cx="13" cy="13" r="10.2" fill="url(#knob)"/><circle cx="12.85" cy="12.8" r="9.45" fill="#b8b8b8"/><line x1="11.60" y1="13.78" x2="5.83" y2="16.98" stroke="#3c3c3c" stroke-width="1.2"/></svg>
<svg class="a" style="left:273px;top:381px" width="8" height="17" viewBox="0 0 8 17"><circle cx="2.3" cy="2.3" r="1.35" fill="#dadada"/><circle cx="5.7" cy="5.4" r="1.35" fill="#dadada"/><circle cx="2.3" cy="8.3" r="1.35" fill="#dadada"/><circle cx="5.7" cy="11.2" r="1.35" fill="#dadada"/><circle cx="2.3" cy="13.9" r="1.35" fill="#dadada"/></svg>
<span class="t" style="left:406.86px;top:200.07px;font-size:12.5px;color:#ffffff;letter-spacing:0.291px;">Input Ports</span>
<span class="t" style="left:947.04px;top:199.67px;font-size:12.5px;color:#ffffff;letter-spacing:0.121px;">Tr: off</span>
<span class="t" style="left:407.47px;top:230.07px;font-size:12.5px;color:#ffffff;letter-spacing:0.287px;">Output Ports</span>
<span class="t" style="left:407.18px;top:260.07px;font-size:12.5px;color:#ffffff;transform:scaleX(0.9281);">Rack 1</span>
<span class="t" style="left:407.3px;top:290.07px;font-size:12.5px;color:#ffffff;transform:scaleX(0.9279);">SMOOTHIE •</span>
<span class="t" style="left:594.16px;top:290.07px;font-size:12.5px;color:#ffffff;transform:scaleX(0.9101);">: CONTROL RACK</span>
<span class="t" style="left:407.83px;top:320.07px;font-size:12.5px;color:#ffffff;transform:scaleX(0.9693);">AIR Compressor 1</span>
<span class="t" style="left:594.58px;top:320.07px;font-size:12.5px;color:#ffffff;letter-spacing:-0.144px;">0: Plugin Snapshot 1</span>
<span class="t" style="left:407.8px;top:350.07px;font-size:12.5px;color:#ffffff;transform:scaleX(0.9416);">VB3 1.4_IK Leslie_Factory •</span>
<span class="t" style="left:594.58px;top:350.07px;font-size:12.5px;color:#ffffff;transform:scaleX(0.9498);">0: VB3 1.4</span>
<span class="t" style="left:407.82px;top:380.07px;font-size:12.5px;color:#ffffff;letter-spacing:0.051px;">Add Object</span>
<svg class="a" style="left:334px;top:257px" width="24" height="24" viewBox="0 0 24 24"><rect x="3.6" y="3.6" width="16.8" height="16.8" rx="6.5" fill="#22c822" fill-opacity="0.16"/><rect x="4.8" y="4.8" width="14.4" height="14.4" rx="5.4" fill="#22c822" fill-opacity="0.25"/><rect x="6" y="6" width="12" height="12" rx="3.6" fill="url(#gled)"/></svg>
<span class="t" style="left:384.4px;top:258.6px;font-family:'Liberation Serif',serif;font-size:14.5px;color:#b4b4b8;transform:scaleX(1.5)">S</span>
<svg class="a" style="left:334px;top:287px" width="24" height="24" viewBox="0 0 24 24"><rect x="3.6" y="3.6" width="16.8" height="16.8" rx="6.5" fill="#22c822" fill-opacity="0.16"/><rect x="4.8" y="4.8" width="14.4" height="14.4" rx="5.4" fill="#22c822" fill-opacity="0.25"/><rect x="6" y="6" width="12" height="12" rx="3.6" fill="url(#gled)"/></svg>
<span class="t" style="left:384.4px;top:288.6px;font-family:'Liberation Serif',serif;font-size:14.5px;color:#b4b4b8;transform:scaleX(1.5)">S</span>
<svg class="a" style="left:334px;top:317px" width="24" height="24" viewBox="0 0 24 24"><rect x="3.6" y="3.6" width="16.8" height="16.8" rx="6.5" fill="#22c822" fill-opacity="0.16"/><rect x="4.8" y="4.8" width="14.4" height="14.4" rx="5.4" fill="#22c822" fill-opacity="0.25"/><rect x="6" y="6" width="12" height="12" rx="3.6" fill="url(#gled)"/></svg>
<span class="t" style="left:384.4px;top:318.6px;font-family:'Liberation Serif',serif;font-size:14.5px;color:#b4b4b8;transform:scaleX(1.5)">S</span>
<svg class="a" style="left:334px;top:347px" width="24" height="24" viewBox="0 0 24 24"><rect x="3.6" y="3.6" width="16.8" height="16.8" rx="6.5" fill="#22c822" fill-opacity="0.16"/><rect x="4.8" y="4.8" width="14.4" height="14.4" rx="5.4" fill="#22c822" fill-opacity="0.25"/><rect x="6" y="6" width="12" height="12" rx="3.6" fill="url(#gled)"/></svg>
<span class="t" style="left:384.4px;top:348.6px;font-family:'Liberation Serif',serif;font-size:14.5px;color:#b4b4b8;transform:scaleX(1.5)">S</span>
<svg class="a" style="left:315px;top:260px" width="18" height="18" viewBox="0 0 18 18"><rect x="2.4" y="5.75" width="13.2" height="2.5" fill="#3a5a3a" stroke="#b0b0b8" stroke-width="1"/><rect x="2.4" y="9.8" width="13.2" height="2.5" fill="#3a5a3a" stroke="#b0b0b8" stroke-width="1"/><g stroke="#98a898" stroke-width="1.1" fill="none"><path d="M2.6 4.6v-1.6l1.2-0.9M15.4 4.6v-1.6l-1.2-0.9M2.6 13.4v1.6l1.2 0.9M15.4 13.4v1.6l-1.2 0.9"/></g></svg>
<svg class="a" style="left:315px;top:290px" width="18" height="18" viewBox="0 0 18 18"><rect x="2.4" y="6.45" width="13.2" height="2.5" fill="#3a5a3a" stroke="#b0b0b8" stroke-width="1"/><rect x="2.4" y="10.5" width="13.2" height="2.5" fill="#3a5a3a" stroke="#b0b0b8" stroke-width="1"/></svg>
<svg class="a" style="left:315px;top:350px" width="18" height="18" viewBox="0 0 18 18"><rect x="2.4" y="6.45" width="13.2" height="2.5" fill="#3a5a3a" stroke="#b0b0b8" stroke-width="1"/><rect x="2.4" y="10.5" width="13.2" height="2.5" fill="#3a5a3a" stroke="#b0b0b8" stroke-width="1"/></svg>
<svg class="a" style="left:315px;top:320px" width="18" height="18" viewBox="0 0 18 18"><g fill="#b4b4b6"><rect x="8.2" y="2" width="1.5" height="12"/><rect x="5.4" y="9.6" width="7" height="1.5"/><circle cx="8.95" cy="14.4" r="1.4"/></g></svg>
<div class="a" style="left:938px;top:257px;width:24px;height:24px;background:#245224;"></div>
<div class="a" style="left:967px;top:257px;width:24px;height:24px;background:#245224;"></div>
<div class="a" style="left:996px;top:257px;width:24px;height:24px;background:#245224;"></div>
<svg class="a" style="left:944px;top:292px" width="12" height="16" viewBox="0 0 12 16"><rect x="1.8" y="1.4" width="8.4" height="12.6" rx="1.6" fill="#dcdcdc" stroke="#f4f4f4" stroke-width="0.6"/><path d="M6 2.6v10.4" stroke="#6a6a6a" stroke-width="1.1"/><path d="M3.6 5h4.8" stroke="#6a6a6a" stroke-width="1.2"/></svg>
<svg class="a" style="left:971px;top:291px" width="18" height="18" viewBox="0 0 18 18"><circle cx="8" cy="9" r="5.9" fill="#e63a1e"/><circle cx="8" cy="9" r="3.9" fill="#fff"/><circle cx="8" cy="9" r="2" fill="#e63a1e"/><path d="M8.6 8.4l3.6-3.9" stroke="#1e9be8" stroke-width="3" stroke-linecap="round"/><path d="M11.6 4.2l1.2-1.2" stroke="#7cc8f4" stroke-width="2.2" stroke-linecap="round"/></svg>
<svg class="a" style="left:1000px;top:291px" width="16" height="18" viewBox="0 0 16 18"><rect x="6.6" y="2" width="2.4" height="2.4" fill="#e8e8e8"/><circle cx="7.8" cy="9.8" r="5.3" fill="#fafafa" stroke="#dcdcdc" stroke-width="0.8"/><path d="M7 8.6l1.6 1.2-1.4 1.2" fill="none" stroke="#e05050" stroke-width="0.8"/></svg>
<svg class="a" style="left:782px;top:321px" width="16" height="17" viewBox="0 0 16 17"><path d="M1.8 1.8h12.4L9.1 8v6.4l-2.2 1.4V8z" fill="#a6a6a9"/></svg>
<svg class="a" style="left:910px;top:316px" width="26" height="26" viewBox="0 0 26 26"><circle cx="13.3" cy="13.4" r="10.899999999999999" fill="#000" fill-opacity="0.3"/><circle cx="13" cy="13" r="10.2" fill="url(#knob)"/><circle cx="12.85" cy="12.8" r="9.45" fill="#b8b8b8"/><line x1="11.60" y1="13.78" x2="5.83" y2="16.98" stroke="#3c3c3c" stroke-width="1.2"/></svg>
<svg class="a" style="left:939px;top:316px" width="26" height="26" viewBox="0 0 26 26"><circle cx="13.500000000000046" cy="13.4" r="10.899999999999999" fill="#000" fill-opacity="0.3"/><circle cx="13.200000000000045" cy="13" r="10.2" fill="url(#knob)"/><circle cx="13.050000000000045" cy="12.8" r="9.45" fill="#b8b8b8"/><line x1="14.66" y1="13.65" x2="20.69" y2="16.34" stroke="#3c3c3c" stroke-width="1.2"/></svg>
<svg class="a" style="left:968px;top:316px" width="26" height="26" viewBox="0 0 26 26"><circle cx="13.3" cy="13.4" r="10.899999999999999" fill="#000" fill-opacity="0.3"/><circle cx="13" cy="13" r="10.2" fill="url(#knob)"/><circle cx="12.85" cy="12.8" r="9.45" fill="#b8b8b8"/><line x1="13.00" y1="11.40" x2="13.00" y2="4.80" stroke="#3c3c3c" stroke-width="1.2"/></svg>
<svg class="a" style="left:997px;top:316px" width="26" height="26" viewBox="0 0 26 26"><circle cx="13.3" cy="13.4" r="10.899999999999999" fill="#000" fill-opacity="0.3"/><circle cx="13" cy="13" r="10.2" fill="url(#knob)"/><circle cx="12.85" cy="12.8" r="9.45" fill="#b8b8b8"/><line x1="13.00" y1="11.40" x2="13.00" y2="4.80" stroke="#3c3c3c" stroke-width="1.2"/></svg>
<svg class="a" style="left:943px;top:352px" width="14" height="15" viewBox="0 0 14 15"><rect x="1" y="1.4" width="12.2" height="12.4" fill="#f2f2f2"/><g fill="#1a1a1a"><rect x="3.2" y="1.4" width="1.7" height="7.6"/><rect x="6.3" y="1.4" width="1.7" height="7.6"/><rect x="9.4" y="1.4" width="1.7" height="7.6"/></g><g stroke="#777" stroke-width="0.5"><path d="M4.05 9v4.8M7.15 9v4.8M10.25 9v4.8"/></g></svg>
<div class="a" style="left:973px;top:358.8px;width:12.4px;height:2px;background:#a4a4a6;"></div>
<div class="a" style="left:978.2px;top:353.6px;width:2px;height:12.4px;background:#a4a4a6;"></div>
<svg class="a" style="left:999.7px;top:351.8px" width="16" height="16" viewBox="0 0 16 16"><g fill="#f4f4f4"><circle cx="8" cy="8" r="4.9"/><rect x="6.6" y="1.7" width="2.8" height="3" transform="rotate(0 8 8)"/><rect x="6.6" y="1.7" width="2.8" height="3" transform="rotate(45 8 8)"/><rect x="6.6" y="1.7" width="2.8" height="3" transform="rotate(90 8 8)"/><rect x="6.6" y="1.7" width="2.8" height="3" transform="rotate(135 8 8)"/><rect x="6.6" y="1.7" width="2.8" height="3" transform="rotate(180 8 8)"/><rect x="6.6" y="1.7" width="2.8" height="3" transform="rotate(225 8 8)"/><rect x="6.6" y="1.7" width="2.8" height="3" transform="rotate(270 8 8)"/><rect x="6.6" y="1.7" width="2.8" height="3" transform="rotate(315 8 8)"/></g><circle cx="8" cy="8" r="2.7" fill="#0c3a0a"/><circle cx="8" cy="8" r="1.5" fill="#f4f4f4"/></svg>
<div class="a" style="left:263px;top:536px;width:1657px;height:1px;background:#3f3f42;"></div>
<div class="a" style="left:263px;top:537px;width:1657px;height:31px;background:#2d2d2f;"></div>
<div class="a" style="left:263px;top:568px;width:1657px;height:1px;background:#3f3f42;"></div>
<svg class="a" style="left:270.1px;top:546.7px" width="16" height="14" viewBox="0 0 16 14"><rect x="1.0" y="1.0" width="6.4" height="5.4" fill="#c4c4c6"/><rect x="1.0" y="7.4" width="6.4" height="5.4" fill="#c4c4c6"/><rect x="8.3" y="1.0" width="6.4" height="5.4" fill="#c4c4c6"/><rect x="8.3" y="7.4" width="6.4" height="5.4" fill="#c4c4c6"/></svg>
<svg class="a" style="left:300px;top:546px" width="16" height="16" viewBox="0 0 16 16"><rect x="1.5" y="1" width="10.8" height="13.5" rx="1" fill="#c4c4c6"/><path d="M11 0.8L14.5 2.2 C13.4 6 11.4 10 6.2 12.8 C6.2 9.4 8 4.6 11 0.8Z" fill="#d2d2d4"/><path d="M11.3 1.2C9 4.2 6.4 8.6 6.2 12.8l2.6-1.6" fill="none" stroke="#2a2a2c" stroke-width="0.9"/></svg>
<svg class="a" style="left:1899px;top:547px" width="14" height="14" viewBox="0 0 14 14"><path d="M2 2l10 10M12 2L2 12" stroke="#d4d4d6" stroke-width="1.6"/></svg>
<div class="a" style="left:0px;top:891px;width:1920px;height:1px;background:#3f3f42;"></div>
<div class="a" style="left:0px;top:892px;width:1920px;height:87px;background:#202b3a;"></div>
<svg class="a" style="left:360px;top:892px" width="1200" height="66" viewBox="0 0 1200 66"><rect x="0" y="0" width="1200" height="66" fill="#fff"/><rect x="0" y="0" width="1" height="66" fill="#8a8a8a"/><rect x="16" y="0" width="1" height="66" fill="#8a8a8a"/><rect x="32" y="0" width="1" height="66" fill="#8a8a8a"/><rect x="48" y="0" width="1" height="66" fill="#8a8a8a"/><rect x="64" y="0" width="1" height="66" fill="#8a8a8a"/><rect x="80" y="0" width="1" height="66" fill="#8a8a8a"/><rect x="96" y="0" width="1" height="66" fill="#8a8a8a"/><rect x="112" y="0" width="1" height="66" fill="#8a8a8a"/><rect x="128" y="0" width="1" height="66" fill="#8a8a8a"/><rect x="144" y="0" width="1" height="66" fill="#8a8a8a"/><rect x="160" y="0" width="1" height="66" fill="#8a8a8a"/><rect x="176" y="0" width="1" height="66" fill="#8a8a8a"/><rect x="192" y="0" width="1" height="66" fill="#8a8a8a"/><rect x="208" y="0" width="1" height="66" fill="#8a8a8a"/><rect x="224" y="0" width="1" height="66" fill="#8a8a8a"/><rect x="240" y="0" width="1" height="66" fill="#8a8a8a"/><rect x="256" y="0" width="1" height="66" fill="#8a8a8a"/><rect x="272" y="0" width="1" height="66" fill="#8a8a8a"/><rect x="288" y="0" width="1" height="66" fill="#8a8a8a"/><rect x="304" y="0" width="1" height="66" fill="#8a8a8a"/><rect x="320" y="0" width="1" height="66" fill="#8a8a8a"/><rect x="336" y="0" width="1" height="66" fill="#8a8a8a"/><rect x="352" y="0" width="1" height="66" fill="#8a8a8a"/><rect x="368" y="0" width="1" height="66" fill="#8a8a8a"/><rect x="384" y="0" width="1" height="66" fill="#8a8a8a"/><rect x="400" y="0" width="1" height="66" fill="#8a8a8a"/><rect x="416" y="0" width="1" height="66" fill="#8a8a8a"/><rect x="432" y="0" width="1" height="66" fill="#8a8a8a"/><rect x="448" y="0" width="1" height="66" fill="#8a8a8a"/><rect x="464" y="0" width="1" height="66" fill="#8a8a8a"/><rect x="480" y="0" width="1" height="66" fill="#8a8a8a"/><rect x="496" y="0" width="1" height="66" fill="#8a8a8a"/><rect x="512" y="0" width="1" height="66" fill="#8a8a8a"/><rect x="528" y="0" width="1" height="66" fill="#8a8a8a"/><rect x="544" y="0" width="1" height="66" fill="#8a8a8a"/><rect x="560" y="0" width="1" height="66" fill="#8a8a8a"/><rect x="576" y="0" width="1" height="66" fill="#8a8a8a"/><rect x="592" y="0" width="1" height="66" fill="#8a8a8a"/><rect x="608" y="0" width="1" height="66" fill="#8a8a8a"/><rect x="624" y="0" width="1" height="66" fill="#8a8a8a"/><rect x="640" y="0" width="1" height="66" fill="#8a8a8a"/><rect x="656" y="0" width="1" height="66" fill="#8a8a8a"/><rect x="672" y="0" width="1" height="66" fill="#8a8a8a"/><rect x="688" y="0" width="1" height="66" fill="#8a8a8a"/><rect x="704" y="0" width="1" height="66" fill="#8a8a8a"/><rect x="720" y="0" width="1" height="66" fill="#8a8a8a"/><rect x="736" y="0" width="1" height="66" fill="#8a8a8a"/><rect x="752" y="0" width="1" height="66" fill="#8a8a8a"/><rect x="768" y="0" width="1" height="66" fill="#8a8a8a"/><rect x="784" y="0" width="1" height="66" fill="#8a8a8a"/><rect x="800" y="0" width="1" height="66" fill="#8a8a8a"/><rect x="816" y="0" width="1" height="66" fill="#8a8a8a"/><rect x="832" y="0" width="1" height="66" fill="#8a8a8a"/><rect x="848" y="0" width="1" height="66" fill="#8a8a8a"/><rect x="864" y="0" width="1" height="66" fill="#8a8a8a"/><rect x="880" y="0" width="1" height="66" fill="#8a8a8a"/><rect x="896" y="0" width="1" height="66" fill="#8a8a8a"/><rect x="912" y="0" width="1" height="66" fill="#8a8a8a"/><rect x="928" y="0" width="1" height="66" fill="#8a8a8a"/><rect x="944" y="0" width="1" height="66" fill="#8a8a8a"/><rect x="960" y="0" width="1" height="66" fill="#8a8a8a"/><rect x="976" y="0" width="1" height="66" fill="#8a8a8a"/><rect x="992" y="0" width="1" height="66" fill="#8a8a8a"/><rect x="1008" y="0" width="1" height="66" fill="#8a8a8a"/><rect x="1024" y="0" width="1" height="66" fill="#8a8a8a"/><rect x="1040" y="0" width="1" height="66" fill="#8a8a8a"/><rect x="1056" y="0" width="1" height="66" fill="#8a8a8a"/><rect x="1072" y="0" width="1" height="66" fill="#8a8a8a"/><rect x="1088" y="0" width="1" height="66" fill="#8a8a8a"/><rect x="1104" y="0" width="1" height="66" fill="#8a8a8a"/><rect x="1120" y="0" width="1" height="66" fill="#8a8a8a"/><rect x="1136" y="0" width="1" height="66" fill="#8a8a8a"/><rect x="1152" y="0" width="1" height="66" fill="#8a8a8a"/><rect x="1168" y="0" width="1" height="66" fill="#8a8a8a"/><rect x="1184" y="0" width="1" height="66" fill="#8a8a8a"/><rect x="1199" y="0" width="1" height="66" fill="#8a8a8a"/><rect x="11.5" y="0" width="9" height="44.3" fill="#000"/><rect x="27.5" y="0" width="9" height="44.3" fill="#000"/><rect x="59.5" y="0" width="9" height="44.3" fill="#000"/><rect x="75.5" y="0" width="9" height="44.3" fill="#000"/><rect x="91.5" y="0" width="9" height="44.3" fill="#000"/><rect x="123.5" y="0" width="9" height="44.3" fill="#000"/><rect x="139.5" y="0" width="9" height="44.3" fill="#000"/><rect x="171.5" y="0" width="9" height="44.3" fill="#000"/><rect x="187.5" y="0" width="9" height="44.3" fill="#000"/><rect x="203.5" y="0" width="9" height="44.3" fill="#000"/><rect x="235.5" y="0" width="9" height="44.3" fill="#000"/><rect x="251.5" y="0" width="9" height="44.3" fill="#000"/><rect x="283.5" y="0" width="9" height="44.3" fill="#000"/><rect x="299.5" y="0" width="9" height="44.3" fill="#000"/><rect x="315.5" y="0" width="9" height="44.3" fill="#000"/><rect x="347.5" y="0" width="9" height="44.3" fill="#000"/><rect x="363.5" y="0" width="9" height="44.3" fill="#000"/><rect x="395.5" y="0" width="9" height="44.3" fill="#000"/><rect x="411.5" y="0" width="9" height="44.3" fill="#000"/><rect x="427.5" y="0" width="9" height="44.3" fill="#000"/><rect x="459.5" y="0" width="9" height="44.3" fill="#000"/><rect x="475.5" y="0" width="9" height="44.3" fill="#000"/><rect x="507.5" y="0" width="9" height="44.3" fill="#000"/><rect x="523.5" y="0" width="9" height="44.3" fill="#000"/><rect x="539.5" y="0" width="9" height="44.3" fill="#000"/><rect x="571.5" y="0" width="9" height="44.3" fill="#000"/><rect x="587.5" y="0" width="9" height="44.3" fill="#000"/><rect x="619.5" y="0" width="9" height="44.3" fill="#000"/><rect x="635.5" y="0" width="9" height="44.3" fill="#000"/><rect x="651.5" y="0" width="9" height="44.3" fill="#000"/><rect x="683.5" y="0" width="9" height="44.3" fill="#000"/><rect x="699.5" y="0" width="9" height="44.3" fill="#000"/><rect x="731.5" y="0" width="9" height="44.3" fill="#000"/><rect x="747.5" y="0" width="9" height="44.3" fill="#000"/><rect x="763.5" y="0" width="9" height="44.3" fill="#000"/><rect x="795.5" y="0" width="9" height="44.3" fill="#000"/><rect x="811.5" y="0" width="9" height="44.3" fill="#000"/><rect x="843.5" y="0" width="9" height="44.3" fill="#000"/><rect x="859.5" y="0" width="9" height="44.3" fill="#000"/><rect x="875.5" y="0" width="9" height="44.3" fill="#000"/><rect x="907.5" y="0" width="9" height="44.3" fill="#000"/><rect x="923.5" y="0" width="9" height="44.3" fill="#000"/><rect x="955.5" y="0" width="9" height="44.3" fill="#000"/><rect x="971.5" y="0" width="9" height="44.3" fill="#000"/><rect x="987.5" y="0" width="9" height="44.3" fill="#000"/><rect x="1019.5" y="0" width="9" height="44.3" fill="#000"/><rect x="1035.5" y="0" width="9" height="44.3" fill="#000"/><rect x="1067.5" y="0" width="9" height="44.3" fill="#000"/><rect x="1083.5" y="0" width="9" height="44.3" fill="#000"/><rect x="1099.5" y="0" width="9" height="44.3" fill="#000"/><rect x="1131.5" y="0" width="9" height="44.3" fill="#000"/><rect x="1147.5" y="0" width="9" height="44.3" fill="#000"/><rect x="1179.5" y="0" width="9" height="44.3" fill="#000"/></svg>
<div class="a" style="left:360px;top:961px;width:1px;height:16px;background:#6c727c;"></div>
<span class="t" style="left:362.12px;top:961.53px;font-size:10px;color:#c8c8c8;letter-spacing:0.23px;">0</span>
<div class="a" style="left:472px;top:961px;width:1px;height:16px;background:#6c727c;"></div>
<span class="t" style="left:473.75px;top:961.53px;font-size:10px;color:#c8c8c8;letter-spacing:1.139px;">12</span>
<div class="a" style="left:584px;top:961px;width:1px;height:16px;background:#6c727c;"></div>
<span class="t" style="left:586.07px;top:961.53px;font-size:10px;color:#c8c8c8;letter-spacing:0.5px;">24</span>
<div class="a" style="left:696px;top:961px;width:1px;height:16px;background:#6c727c;"></div>
<span class="t" style="left:698.01px;top:961.53px;font-size:10px;color:#c8c8c8;letter-spacing:0.761px;">36</span>
<div class="a" style="left:808px;top:961px;width:1px;height:16px;background:#6c727c;"></div>
<span class="t" style="left:810.33px;top:961.53px;font-size:10px;color:#c8c8c8;letter-spacing:0.43px;">48</span>
<div class="a" style="left:920px;top:961px;width:1px;height:16px;background:#6c727c;"></div>
<span class="t" style="left:922.05px;top:961.53px;font-size:10px;color:#c8c8c8;letter-spacing:0.7px;">60</span>
<div class="a" style="left:1032px;top:961px;width:1px;height:16px;background:#6c727c;"></div>
<span class="t" style="left:1033.93px;top:961.53px;font-size:10px;color:#c8c8c8;letter-spacing:0.957px;">72</span>
<div class="a" style="left:1144px;top:961px;width:1px;height:16px;background:#6c727c;"></div>
<span class="t" style="left:1146.08px;top:961.53px;font-size:10px;color:#c8c8c8;letter-spacing:0.496px;">84</span>
<div class="a" style="left:1256px;top:961px;width:1px;height:16px;background:#6c727c;"></div>
<span class="t" style="left:1258.04px;top:961.53px;font-size:10px;color:#c8c8c8;letter-spacing:0.73px;">96</span>
<div class="a" style="left:1368px;top:961px;width:1px;height:16px;background:#6c727c;"></div>
<span class="t" style="left:1369.75px;top:961.53px;font-size:10px;color:#c8c8c8;letter-spacing:0.465px;">108</span>
<div class="a" style="left:1480px;top:961px;width:1px;height:16px;background:#6c727c;"></div>
<span class="t" style="left:1481.75px;top:961.53px;font-size:10px;color:#c8c8c8;letter-spacing:0.45px;">120</span>
<div class="a" style="left:811px;top:962.2px;width:107px;height:2.8px;background:#a2a2a2;"></div>
<div class="a" style="left:923px;top:962.2px;width:107px;height:2.8px;background:#a2a2a2;"></div>
<div class="a" style="left:1840px;top:961px;width:80px;height:18px;background:#10151f;border-top-left-radius:9px"></div>
<span class="t" style="left:1850.47px;top:961.17px;font-size:12.5px;color:#ffffff;transform:scaleX(0.9211);">Ch: 1</span>
<svg class="a" style="left:1904px;top:964px" width="12" height="12" viewBox="0 0 12 12"><defs><radialGradient id="sq" cx="50%" cy="48%" r="70%"><stop offset="0" stop-color="#ffffff"/><stop offset="0.35" stop-color="#e0e0e0"/><stop offset="0.8" stop-color="#a0a0a0"/><stop offset="1" stop-color="#808080"/></radialGradient></defs><rect x="1" y="1.4" width="10" height="9.2" fill="url(#sq)"/></svg>
<div class="a" style="left:0px;top:979px;width:1920px;height:1px;background:#4a4a4c;"></div>
</body></html>
